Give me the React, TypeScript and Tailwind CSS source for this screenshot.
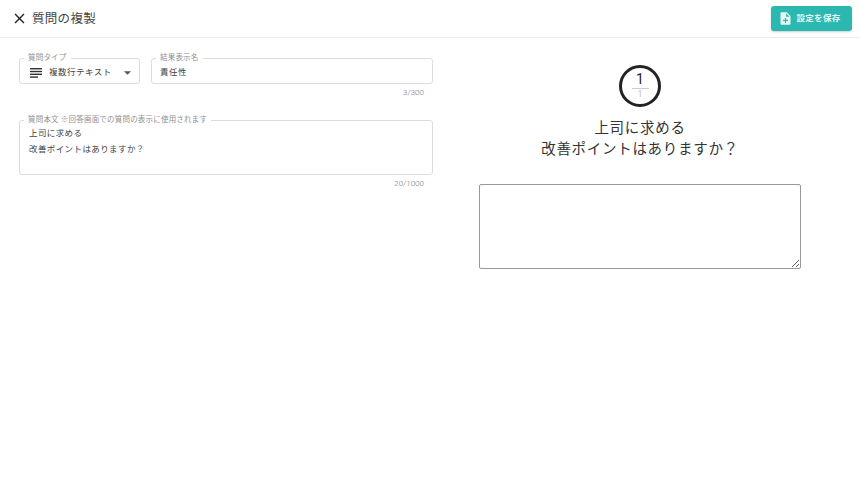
const font = "font-['Roboto','Noto_Sans_CJK_JP',sans-serif]";

function Field({
  label,
  className,
  children,
}: {
  label: string;
  className: string;
  children: React.ReactNode;
}) {
  return (
    <fieldset className={`rounded-[3px] border border-[#dcdcdc] pl-[4px] pr-[5px] ${className}`}>
      <legend className="px-[4px] text-[7.5px] leading-[10px] tracking-[0.2px] text-[#909090]">{label}</legend>
      {children}
    </fieldset>
  );
}

export default function App() {
  return (
    <div className={`flex h-[500px] w-[860px] flex-col bg-white ${font}`}>
      {/* header */}
      <header className="flex h-[38px] items-center justify-between border-b border-[#ececec] pl-[11px] pr-[8px]">
        <div className="flex items-center gap-[4px]">
          <svg viewBox="0 0 24 24" className="h-[17px] w-[17px] text-[#222]" fill="currentColor">
            <path d="M19 6.41 17.59 5 12 10.59 6.41 5 5 6.41 10.59 12 5 17.59 6.41 19 12 13.41 17.59 19 19 17.59 13.41 12z" />
          </svg>
          <h1 className="pt-[2px] text-[12.5px] tracking-[0.3px] text-[#444]">質問の複製</h1>
        </div>
        <button className="flex h-[25px] w-[81px] items-center justify-center gap-[3px] rounded-[3px] bg-[#2bb8b0] pr-[4px] text-[8.5px] font-bold tracking-[0.3px] text-[#e6f7f6] shadow-[0_1px_2px_rgba(0,0,0,0.2)]">
          <svg viewBox="0 0 24 24" className="h-[15px] w-[15px]" fill="currentColor">
            <path d="M14 2H6c-1.1 0-1.99.9-1.99 2L4 20c0 1.1.89 2 1.99 2H18c1.1 0 2-.9 2-2V8l-6-6zm2 14h-3v3h-2v-3H8v-2h3v-3h2v3h3v2zm-3-7V3.5L18.5 9H13z" />
          </svg>
          設定を保存
        </button>
      </header>

      <main className="flex flex-1">
        {/* form */}
        <section className="w-[453px] pl-[19px] pr-[20px] pt-[15px]">
          <div className="flex gap-[11px]">
            <Field label="質問タイプ" className="h-[31px] w-[121px]">
              <div className="flex h-[19px] items-center pl-[6px] pr-[3px] text-[8.5px] tracking-[0.5px] text-[#444]">
                <svg viewBox="0 0 12 10" className="mr-[7px] h-[10px] w-[12px] text-[#333]" fill="currentColor">
                  <rect x="0" y="0" width="12" height="1.4" />
                  <rect x="0" y="2.8" width="12" height="1.4" />
                  <rect x="0" y="5.6" width="12" height="1.4" />
                  <rect x="0" y="8.4" width="8" height="1.4" />
                </svg>
                <span>複数行テキスト</span>
                <svg viewBox="0 0 8 4" className="ml-auto h-[4px] w-[7px] text-[#555]" fill="currentColor">
                  <path d="M0 0h8L4 4z" />
                </svg>
              </div>
            </Field>
            <div className="flex-1">
              <Field label="結果表示名" className="h-[31px]">
                <div className="flex h-[19px] items-center px-[4px] text-[8.5px] tracking-[0.5px] text-[#444]">責任性</div>
              </Field>
              <p className="mt-[3px] pr-[9px] text-right text-[8px] font-light leading-[12px] text-[#777]">3/300</p>
            </div>
          </div>

          <Field label="質問本文 ※回答画面での質問の表示に使用されます" className="mt-[16px] h-[60px]">
            <div className="px-[5px] text-[8.5px] leading-[16px] tracking-[0.4px] text-[#444]">
              上司に求める
              <br />
              改善ポイントはありますか？
            </div>
          </Field>
          <p className="mt-[3px] pr-[9px] text-right text-[8px] font-light leading-[12px] text-[#777]">20/1000</p>
        </section>

        {/* preview */}
        <section className="flex flex-1 flex-col items-center pr-[33px] pt-[27px]">
          <div className="flex h-[42px] w-[42px] flex-col items-center justify-center rounded-full border-[3.5px] border-[#222]">
            <span className="text-[14px] leading-[15px] text-[#222]">1</span>
            <span className="mt-[1px] w-[17px] border-t border-[#ccc] text-center text-[9px] leading-[11px] text-[#c4c4c4]">1</span>
          </div>
          <h2 className="mt-[11px] text-center text-[14.5px] leading-[21px] tracking-[0.7px] text-[#333]">
            上司に求める
            <br />
            改善ポイントはありますか？
          </h2>
          <textarea
            readOnly
            className="mt-[24px] h-[85px] w-[322px] rounded-[2px] border border-[#999] bg-white"
          />
        </section>
      </main>
    </div>
  );
}
